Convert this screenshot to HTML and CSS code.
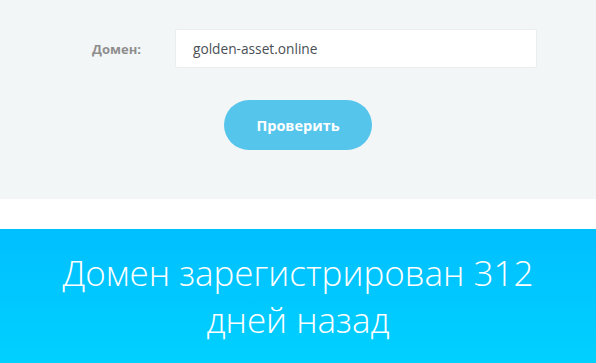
FILE: index.html
```html
<!DOCTYPE html>
<html lang="ru">
<head>
    <meta charset="UTF-8">
    <meta name="viewport" content="width=device-width, initial-scale=1.0">
    <title>Проверка домена</title>
    <link rel="stylesheet" href="styles.css">
</head>
<body>
    <!-- Domain check form -->
    <div class="check-panel">
        <form class="check-form">
            <div class="form-row">
                <label for="domain" class="form-label">Домен:</label>
                <input type="text" id="domain" name="domain" class="form-input" value="golden-asset.online">
            </div>
            <div class="form-actions">
                <button type="submit" class="check-button">Проверить</button>
            </div>
        </form>
    </div>

    <!-- Result -->
    <div class="result-panel">
        <p class="result-text">Домен зарегистрирован 312 дней назад</p>
    </div>
</body>
</html>
```

FILE: styles.css
```css
body {
    font-family: "Open Sans", Arial, sans-serif;
    margin: 0;
    padding: 0;
    background: #ffffff;
}
.check-panel {
    background: #f3f6f7;
    padding: 29px 0 49px;
}
.form-row {
    display: flex;
    align-items: center;
    padding-left: 92px;
}
.form-label {
    width: 83px;
    font-size: 13px;
    font-weight: 700;
    color: #8e8e8e;
}
.form-input {
    width: 362px;
    height: 39px;
    box-sizing: border-box;
    padding: 0 17px;
    border: 1px solid #eaeef0;
    border-radius: 2px;
    background: #ffffff;
    font-family: "Open Sans", Arial, sans-serif;
    font-size: 13.7px;
    color: #4a4f55;
    outline: none;
}
.form-actions {
    display: flex;
    justify-content: center;
    margin-top: 32px;
}
.check-button {
    width: 148px;
    height: 50px;
    border: none;
    border-radius: 25px;
    background: #56c5ec;
    color: #ffffff;
    font-family: "Open Sans", Arial, sans-serif;
    font-size: 14.5px;
    font-weight: 700;
    cursor: pointer;
}
.result-panel {
    margin-top: 30px;
    min-height: 134px;
    background: linear-gradient(to bottom, #00bfff, #00d3ff);
    padding: 20px 40px 0;
}
.result-text {
    margin: 0 auto;
    max-width: 500px;
    text-align: center;
    color: #ffffff;
    font-family: "Open Sans", Arial, sans-serif;
    font-weight: 300;
    font-size: 35px;
    line-height: 47px;
}
```
